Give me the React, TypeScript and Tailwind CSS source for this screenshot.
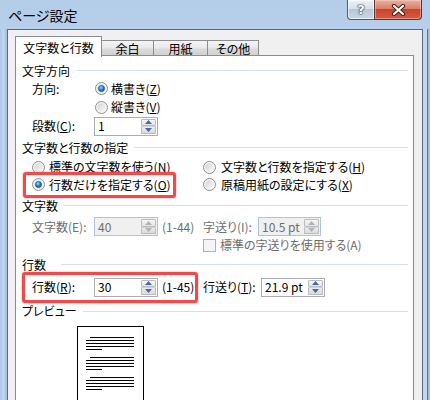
import React from "react";

function Radio({ checked, disabled }: { checked?: boolean; disabled?: boolean }) {
  return (
    <svg width="13" height="13" viewBox="0 0 13 13" className="shrink-0">
      <defs>
        <linearGradient id="rgIn" x1="0" y1="0" x2="1" y2="1">
          <stop offset="0" stopColor="#d4d4d4" />
          <stop offset="1" stopColor="#f8f8f8" />
        </linearGradient>
        <radialGradient id="rgDot" cx="0.4" cy="0.35" r="0.75">
          <stop offset="0" stopColor="#8adcff" />
          <stop offset="0.55" stopColor="#1f7bcc" />
          <stop offset="1" stopColor="#0f3f73" />
        </radialGradient>
      </defs>
      <circle cx="6.5" cy="6.5" r="6" fill="#f6f6f6" stroke={disabled ? "#b0b0b0" : "#8c8f92"} strokeWidth="1" />
      <circle cx="6.5" cy="6.5" r="4.3" fill="url(#rgIn)" />
      {checked && <circle cx="6.5" cy="6.5" r="3.1" fill="url(#rgDot)" stroke="#1b4f80" strokeWidth="0.6" />}
    </svg>
  );
}

function Arrow({ up, disabled }: { up?: boolean; disabled?: boolean }) {
  return (
    <svg width="7" height="4" viewBox="0 0 7 4">
      <path d={up ? "M0 4 L3.5 0 L7 4 Z" : "M0 0 L3.5 4 L7 0 Z"} fill={disabled ? "#b3b3b3" : "#4a67a8"} />
    </svg>
  );
}

function SpinBox({ value, w, disabled }: { value: string; w: string; disabled?: boolean }) {
  return (
    <div
      className={
        w +
        " h-[19px] border flex items-stretch shrink-0 " +
        (disabled ? "border-[#aec4de] bg-[#f0f0f0] text-[#6d6d6d]" : "border-[#abadb3] bg-white text-black")
      }
    >
      <div className="flex-1 pl-[3px] flex items-center text-[12px] leading-[14px]">{value}</div>
      <div className="w-[16px] flex flex-col py-px pr-px gap-0">
        <div className="flex-1 border border-[#b9bdc2] rounded-[1px] bg-[linear-gradient(180deg,#f7f7f7,#e4e4e4)] flex items-center justify-center">
          <Arrow up disabled={disabled} />
        </div>
        <div className="flex-1 border border-[#b9bdc2] border-t-[#d0d3d6] rounded-[1px] bg-[linear-gradient(180deg,#ececec,#dadada)] flex items-center justify-center">
          <Arrow disabled={disabled} />
        </div>
      </div>
    </div>
  );
}

function Header({ label, h, ml }: { label: string; h: string; ml: string }) {
  return (
    <div className={"flex items-center pl-[6px] pr-[5px] " + h}>
      <span className="shrink-0">{label}</span>
      <div className={"flex-1 h-px bg-[#d5dfe5] " + ml} />
    </div>
  );
}

function U({ c }: { c: string }) {
  return <span className="underline underline-offset-[1px]">{c}</span>;
}

function PreviewGroup({ first }: { first?: boolean }) {
  return (
    <div className={"flex flex-col " + (first ? "" : "mt-[7px]")}>
      <div className="h-px bg-black ml-[4px]" />
      <div className="h-px bg-black mt-[2px]" />
      <div className="h-px bg-black mt-[2px]" />
      <div className="h-px bg-black mt-[2px]" />
      <div className="h-px bg-black mt-[2px] w-[16px]" />
    </div>
  );
}

export default function App() {
  return (
    <div className="w-[430px] h-[400px] overflow-hidden flex flex-col bg-[linear-gradient(180deg,#b3cce8_0%,#c6daef_35%,#bcd3ec_100%)] font-['Noto_Sans_CJK_JP','Noto_Sans',sans-serif] [font-feature-settings:'palt'] text-[12px] leading-[14px] text-black">
      {/* title bar */}
      <div className="h-[29px] flex justify-between items-start shrink-0">
        <div className="pl-[8px] pt-[6px] text-[14px] leading-[18px] text-black">ページ設定</div>
        <div className="flex mr-[8px]">
          <div className="w-[28px] h-[20px] border border-t-0 border-[#4f5c6e] rounded-bl-[4px] bg-[linear-gradient(180deg,#eef3f8_0%,#d6e0eb_45%,#b8c7d8_50%,#cad7e5_100%)] shadow-[inset_0_0_0_1px_rgba(255,255,255,0.6)] flex items-center justify-center">
            <span className="font-['DejaVu_Sans',sans-serif] font-bold text-[13px] leading-[14px] text-white [text-shadow:0_0_1px_#2c3a4a,0_0_1px_#2c3a4a,0_0_2px_#2c3a4a]">?</span>
          </div>
          <div className="w-[48px] h-[20px] -ml-px border border-t-0 border-[#5a3430] rounded-br-[4px] bg-[linear-gradient(180deg,#eab1a2_0%,#dc7e68_45%,#c7432a_50%,#d45d43_100%)] shadow-[inset_0_0_0_1px_rgba(255,220,210,0.45)] flex items-center justify-center">
            <svg width="15" height="12" viewBox="0 0 15 12">
              <path d="M3 2 L12 10 M12 2 L3 10" stroke="#3a1f1a" strokeWidth="4.2" strokeLinecap="round" />
              <path d="M3 2 L12 10 M12 2 L3 10" stroke="#ffffff" strokeWidth="2.3" strokeLinecap="round" />
            </svg>
          </div>
        </div>
      </div>

      {/* body */}
      <div className="flex flex-1 min-h-0">
        <div className="w-[7px] shrink-0 bg-[linear-gradient(90deg,#a7c3e3_0%,#c3d8ee_45%,#9fbbdd_100%)]" />
        <div className="w-[416px] shrink-0 border-l border-t border-r border-[#5d6978] bg-[#f0f0f0] pt-[6px] pl-[7px] pr-[8px] flex flex-col">
          {/* tabs */}
          <div className="h-[20px] flex shrink-0">
            <div className="self-start relative z-10 w-[87px] h-[21px] bg-white border-l border-t border-r border-[#898c95] flex justify-center pt-[4px]">
              文字数と行数
            </div>
            <div className="self-end -ml-px w-[53px] h-[16px] border-l border-t border-r border-[#898c95] bg-[linear-gradient(180deg,#f4f4f4_0%,#e9e9e9_45%,#dadada_55%,#d0d0d0_100%)] flex items-center justify-center">
              余白
            </div>
            <div className="self-end -ml-px w-[55px] h-[16px] border-l border-t border-r border-[#898c95] bg-[linear-gradient(180deg,#f4f4f4_0%,#e9e9e9_45%,#dadada_55%,#d0d0d0_100%)] flex items-center justify-center">
              用紙
            </div>
            <div className="self-end -ml-px w-[52px] h-[16px] border-l border-t border-r border-[#898c95] bg-[linear-gradient(180deg,#f4f4f4_0%,#e9e9e9_45%,#dadada_55%,#d0d0d0_100%)] flex items-center justify-center">
              その他
            </div>
          </div>

          {/* panel */}
          <div className="-mt-px h-[360px] shrink-0 bg-white border border-[#898c95] pt-[6px] flex flex-col">
            <Header label="文字方向" h="h-[18px]" ml="ml-[7px]" />
            <div className="h-[19px] flex items-center pl-[16px]">
              <span className="w-[63px] shrink-0">方向:</span>
              <Radio checked />
              <span className="ml-[3px]">
                横書き(<U c="Z" />)
              </span>
            </div>
            <div className="h-[19px] flex items-center pl-[79px]">
              <Radio />
              <span className="ml-[3px]">
                縦書き(<U c="V" />)
              </span>
            </div>
            <div className="h-[20px] flex items-center pl-[16px]">
              <span className="w-[62px] shrink-0">
                段数(<U c="C" />):
              </span>
              <SpinBox value="1" w="w-[64px]" />
            </div>

            <Header label="文字数と行数の指定" h="h-[24px]" ml="ml-[6px]" />
            <div className="h-[16px] flex items-center pl-[16px]">
              <div className="w-[171px] flex items-center shrink-0">
                <Radio />
                <span className="ml-[4px]">
                  標準の文字数を使う(<U c="N" />)
                </span>
              </div>
              <Radio />
              <span className="ml-[5px]">
                文字数と行数を指定する(<U c="H" />)
              </span>
            </div>
            <div className="h-[20px] flex items-center pl-[16px] relative">
              <div className="absolute left-[7px] top-[-3px] w-[153px] h-[26px] border-[3px] border-[#f24a4a] rounded-[3px] shadow-[0_0_2px_rgba(240,80,80,0.7)] pointer-events-none" />
              <div className="w-[171px] flex items-center shrink-0">
                <Radio checked />
                <span className="ml-[4px]">
                  行数だけを指定する(<U c="O" />)
                </span>
              </div>
              <Radio />
              <span className="ml-[5px]">
                原稿用紙の設定にする(<U c="X" />)
              </span>
            </div>

            <Header label="文字数" h="h-[24px]" ml="ml-[5px]" />
            <div className="h-[18px] flex items-center pl-[16px] text-[#6d6d6d]">
              <span className="w-[62px] shrink-0">文字数(E):</span>
              <SpinBox value="40" w="w-[64px]" disabled />
              <span className="w-[45px] pl-[4px] shrink-0">(1-44)</span>
              <span className="w-[55px] shrink-0">字送り(I):</span>
              <SpinBox value="10.5 pt" w="w-[63px]" disabled />
            </div>
            <div className="h-[20px] flex items-center pl-[187px] text-[#6d6d6d]">
              <div className="w-[13px] h-[13px] border border-[#b1b1b1] bg-[#f4f4f4] shrink-0" />
              <span className="ml-[4px]">標準の字送りを使用する(A)</span>
            </div>

            <Header label="行数" h="h-[20px]" ml="ml-[15px]" />
            <div className="h-[26px] flex items-center pl-[16px] relative">
              <div className="absolute left-[6px] top-[-3px] w-[176px] h-[31px] border-[3px] border-[#f24a4a] rounded-[3px] shadow-[0_0_2px_rgba(240,80,80,0.7)] pointer-events-none" />
              <span className="w-[62px] shrink-0">
                行数(<U c="R" />):
              </span>
              <SpinBox value="30" w="w-[64px]" />
              <span className="w-[45px] pl-[4px] shrink-0">(1-45)</span>
              <span className="w-[58px] shrink-0">
                行送り(<U c="T" />):
              </span>
              <SpinBox value="21.9 pt" w="w-[64px]" />
            </div>

            <Header label="プレビュー" h="h-[24px]" ml="ml-[6px]" />
            <div className="mt-[3px] ml-[61px] w-[67px] h-[90px] border border-black bg-white pt-[10px] pl-[8px] pr-[9px] flex flex-col">
              <PreviewGroup first />
              <PreviewGroup />
              <PreviewGroup />
            </div>
          </div>
        </div>
        <div className="w-[7px] shrink-0 bg-[linear-gradient(90deg,#c0d6ee_0%,#c4d9ef_50%,#55708f_60%,#5a7595_70%,#a9c6e7_80%,#a3c2e6_100%)]" />
      </div>
    </div>
  );
}
